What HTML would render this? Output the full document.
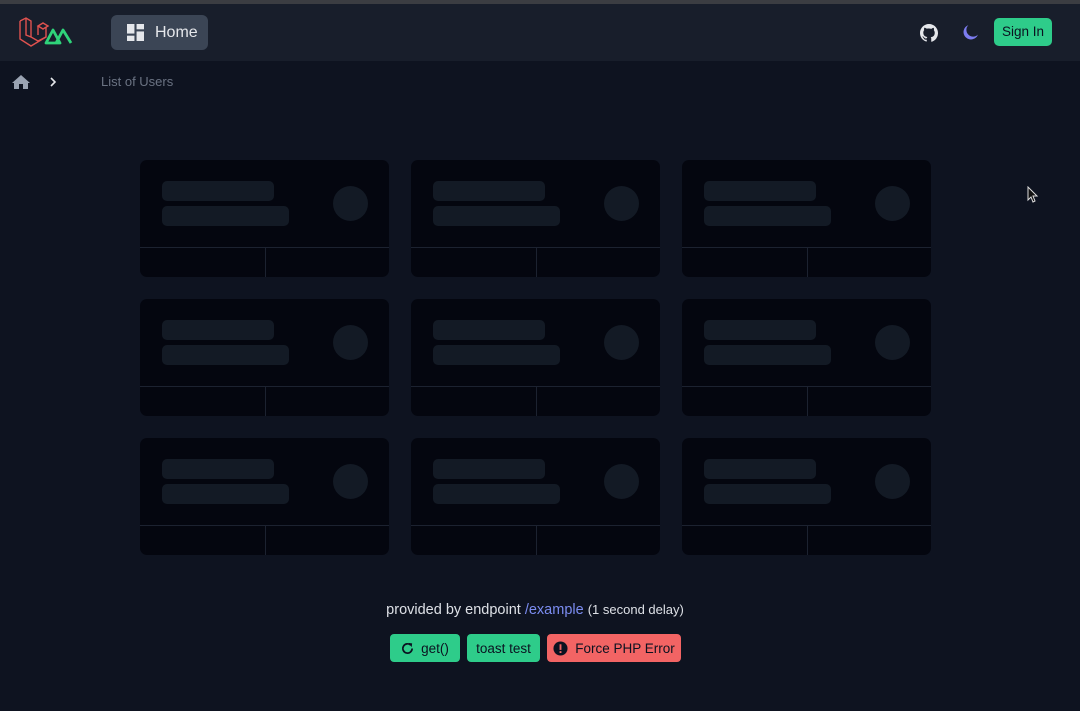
<!DOCTYPE html>
<html><head><style>
*{box-sizing:border-box;margin:0;padding:0}
body{width:1080px;height:711px;background:#0e1320;font-family:"Liberation Sans",sans-serif;position:relative;overflow:hidden}
.top{position:absolute;left:0;top:0;width:1080px;height:4px;background:#3b3d42}
.hdr{position:absolute;left:0;top:4px;width:1080px;height:57px;background:#181e2b}
.home{position:absolute;left:111px;top:11px;width:97px;height:35px;background:#3b4555;border-radius:6px;color:#e5e7eb;font-size:16px}
.card{position:absolute;width:249px;height:117px;background:#04060f;border-radius:7px;overflow:hidden}
.b1{position:absolute;left:22px;top:21px;width:112px;height:20px;background:#131a25;border-radius:5px}
.b2{position:absolute;left:22px;top:46px;width:127px;height:20px;background:#131a25;border-radius:5px}
.c{position:absolute;left:193px;top:26px;width:35px;height:35px;border-radius:50%;background:#131a25}
.h{position:absolute;left:0;top:87px;width:249px;height:1px;background:#1c2230}
.v{position:absolute;left:125px;top:88px;width:1px;height:30px;background:#1c2230}
.btn{position:absolute;top:634px;height:28px;border-radius:4px;font-size:13.5px;color:#0b1220;display:flex;align-items:center;justify-content:center;gap:7px}
</style></head><body>
<div class="top"></div>
<div class="hdr">
<svg style="position:absolute;left:18px;top:12px" width="56" height="32" viewBox="0 0 56 32">
<g fill="none" stroke="#e0524f" stroke-width="1.4"><path d="M2 5 L8 2 L13 5 L13 21 L20 25 L28 21 L28 11"/><path d="M2 5 L2 23 L13 30 L28 21"/><path d="M8 2 L8 19 L13 21"/><path d="M20 10 L25 7 L30 10 L25 13 Z"/><path d="M20 10 L20 19"/></g>
<path d="M28 27 L35 14 L42 27 Z M38 27 L45 14 L53 27" fill="none" stroke="#2fd37a" stroke-width="2.8" stroke-linejoin="round"/>
</svg>
<div class="home"><svg style="position:absolute;left:16px;top:9px" width="17" height="17" viewBox="0 0 16 16" fill="#e5e7eb"><rect x="0" y="0" width="7" height="9"/><rect x="9" y="0" width="7" height="5"/><rect x="0" y="11" width="7" height="5"/><rect x="9" y="7" width="7" height="9"/></svg><span style="position:absolute;left:44px;top:9px">Home</span></div>
<svg style="position:absolute;left:920px;top:20px" width="18" height="18" viewBox="0 0 16 16" fill="#e5e7eb"><path d="M8 0C3.58 0 0 3.58 0 8c0 3.54 2.29 6.53 5.47 7.59.4.07.55-.17.55-.38v-1.34c-2.23.48-2.7-1.07-2.7-1.07-.36-.92-.89-1.17-.89-1.17-.73-.5.06-.49.06-.49.8.06 1.23.83 1.23.83.71 1.22 1.87.87 2.33.66.07-.52.28-.87.51-1.07-1.78-.2-3.64-.89-3.64-3.95 0-.87.31-1.59.82-2.15-.08-.2-.36-1.02.08-2.12 0 0 .67-.21 2.2.82A7.6 7.6 0 0 1 8 4.04c.68 0 1.36.09 2 .27 1.53-1.04 2.2-.82 2.2-.82.44 1.1.16 1.92.08 2.12.51.56.82 1.27.82 2.15 0 3.07-1.87 3.75-3.65 3.95.29.25.54.73.54 1.48v2.2c0 .21.15.46.55.38A8 8 0 0 0 16 8c0-4.42-3.58-8-8-8z"/></svg>
<svg style="position:absolute;left:962px;top:20px" width="17" height="17" viewBox="0 0 16 16"><path d="M6 1 A7 7 0 1 0 15 10 A6 6 0 0 1 6 1Z" fill="#7c7cf0"/></svg>
<div style="position:absolute;left:994px;top:14px;width:58px;height:28px;background:#2ecc8a;border-radius:5px;font-size:13.5px;color:#0b1220;text-align:center;line-height:28px">Sign In</div>
</div>
<svg style="position:absolute;left:12px;top:74px" width="18" height="16" viewBox="0 0 18 16" fill="#9aa3b2"><path d="M9 1 L0 9 L2 9 L2 15 L7 15 L7 10 L11 10 L11 15 L16 15 L16 9 L18 9 Z"/></svg>
<svg style="position:absolute;left:49px;top:77px" width="8" height="10" viewBox="0 0 8 10"><path d="M2 1 L6 5 L2 9" fill="none" stroke="#e5e7eb" stroke-width="1.6"/></svg>
<div style="position:absolute;left:101px;top:74px;font-size:13px;color:#6b7383">List of Users</div>

<div class="card" style="left:140px;top:160px"><i class="b1"></i><i class="b2"></i><i class="c"></i><i class="h"></i><i class="v"></i></div>
<div class="card" style="left:411px;top:160px"><i class="b1"></i><i class="b2"></i><i class="c"></i><i class="h"></i><i class="v"></i></div>
<div class="card" style="left:682px;top:160px"><i class="b1"></i><i class="b2"></i><i class="c"></i><i class="h"></i><i class="v"></i></div>
<div class="card" style="left:140px;top:299px"><i class="b1"></i><i class="b2"></i><i class="c"></i><i class="h"></i><i class="v"></i></div>
<div class="card" style="left:411px;top:299px"><i class="b1"></i><i class="b2"></i><i class="c"></i><i class="h"></i><i class="v"></i></div>
<div class="card" style="left:682px;top:299px"><i class="b1"></i><i class="b2"></i><i class="c"></i><i class="h"></i><i class="v"></i></div>
<div class="card" style="left:140px;top:438px"><i class="b1"></i><i class="b2"></i><i class="c"></i><i class="h"></i><i class="v"></i></div>
<div class="card" style="left:411px;top:438px"><i class="b1"></i><i class="b2"></i><i class="c"></i><i class="h"></i><i class="v"></i></div>
<div class="card" style="left:682px;top:438px"><i class="b1"></i><i class="b2"></i><i class="c"></i><i class="h"></i><i class="v"></i></div>

<svg style="position:absolute;left:1027px;top:186px" width="12" height="18" viewBox="0 0 12 18"><path d="M1 1 L1 14 L4 11 L6 16 L8 15 L6 10 L10 10 Z" fill="#111" stroke="#ddd" stroke-width="1"/></svg>

<div style="position:absolute;left:0;width:1070px;top:602px;text-align:center;font-size:14.5px;color:#dde0e6">provided by endpoint <span style="color:#7b8cf0">/example</span> <span style="font-size:13px">(1 second delay)</span></div>
<div class="btn" style="left:390px;width:70px;background:#2ecc8a"><svg width="13" height="13" viewBox="0 0 14 14"><path d="M12 7 A5 5 0 1 1 10.5 3.4" fill="none" stroke="#0b1220" stroke-width="1.8"/><path d="M8 1 L12 1.5 L11.5 5.5Z" fill="#0b1220"/></svg>get()</div>
<div class="btn" style="left:467px;width:73px;background:#2ecc8a">toast test</div>
<div class="btn" style="left:547px;width:134px;background:#f26464"><svg width="15" height="15" viewBox="0 0 16 16"><circle cx="8" cy="8" r="7.5" fill="#0b1220"/><rect x="7" y="3.5" width="2" height="6" fill="#f26464"/><rect x="7" y="10.8" width="2" height="2" fill="#f26464"/></svg>Force PHP Error</div>
</body></html>
